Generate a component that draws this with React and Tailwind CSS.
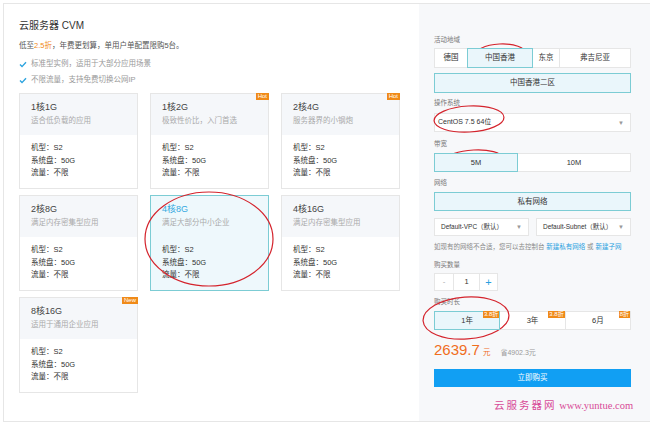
import React from "react"

const plans = [
  { name: "1核1G", desc: "适合低负载的应用" },
  { name: "1核2G", desc: "极致性价比，入门首选", tag: "Hot" },
  { name: "2核4G", desc: "服务器界的小钢炮", tag: "Hot" },
  { name: "2核8G", desc: "满足内存密集型应用" },
  { name: "4核8G", desc: "满足大部分中小企业", active: true },
  { name: "4核16G", desc: "满足内存密集型应用" },
  { name: "8核16G", desc: "适用于通用企业应用", tag: "New" },
]

function Check() {
  return (
    <svg width="8" height="7" viewBox="0 0 8 7" className="mr-[4px]">
      <polyline points="1,3.6 3,5.6 7,1.2" fill="none" stroke="#2ba3df" strokeWidth="1.4" />
    </svg>
  )
}

function Caret() {
  return <span className="text-[6px] text-[#999] leading-none">▼</span>
}

function PlanCard({ plan }) {
  const on = plan.active
  return (
    <div className={"relative h-[96px] border " + (on ? "border-[#7cccd4] bg-[#eef8fc]" : "border-[#e6e6e6] bg-white")}>
      {plan.tag && (
        <div className="absolute -top-px -right-px h-[7px] px-[2px] bg-[#f08a18] text-white text-[6px] leading-[7px]">{plan.tag}</div>
      )}
      <div className={"h-[41px] pt-[7px] px-[11px] " + (on ? "" : "bg-[#f5f7fa]")}>
        <div className={"text-[9px] leading-[12px] " + (on ? "text-[#35a9e0]" : "text-[#444]")}>{plan.name}</div>
        <div className="mt-[3px] text-[7.5px] leading-[10px] text-[#aaa]">{plan.desc}</div>
      </div>
      <div className="pt-[7px] px-[11px] text-[7.5px] leading-[12.5px] text-[#333]">
        <div>机型：S2</div>
        <div>系统盘：50G</div>
        <div>流量：不限</div>
      </div>
    </div>
  )
}

function Label({ children, className = "" }) {
  return <div className={"text-[6.5px] leading-[10px] text-[#777] " + className}>{children}</div>
}

function Opt({ children, on, w, className = "" }) {
  return (
    <div
      className={
        "flex items-center justify-center border text-[7.5px] " +
        (on ? "relative z-10 border-[#7cccd4] bg-[#eaf6fb] text-[#333] " : "border-[#e6e6e6] bg-white text-[#333] ") +
        className
      }
      style={w ? { width: w } : undefined}
    >
      {children}
    </div>
  )
}

export default function App() {
  return (
    <div className="relative w-[650px] h-[426px] bg-white overflow-hidden font-['Liberation_Sans','Noto_Sans_CJK_SC',sans-serif]">
      <div className="ml-[3px] mt-[3px] w-[647px] h-[419px] flex border-l border-t border-b border-[#e6e6e6]">
        {/* left: plans */}
        <div className="w-[415px] bg-white pl-[15px] pt-[15px]">
          <div className="text-[10px] leading-[14px] text-[#333]">云服务器 CVM</div>
          <div className="mt-[8px] text-[7.5px] leading-[10px] text-[#555]">
            低至<span className="text-[#f08a18]">2.5折</span>，年费更划算，单用户单配置限购5台。
          </div>
          <div className="mt-[8px] flex items-center text-[7.5px] leading-[10px] text-[#999]">
            <Check />标准型实例，适用于大部分应用场景
          </div>
          <div className="mt-[6px] flex items-center text-[7.5px] leading-[10px] text-[#999]">
            <Check />不限流量，支持免费切换公网IP
          </div>
          <div className="mt-[8px] grid grid-cols-[119px_119px_119px] gap-x-[12px] gap-y-[6px]">
            {plans.map((p) => (
              <PlanCard key={p.name} plan={p} />
            ))}
          </div>
        </div>

        {/* right: order form */}
        <div className="flex-1 bg-[#f7f8fa] pl-[15px] pt-[31px]">
          <div className="w-[197px]">
            <Label>活动地域</Label>
            <div className="mt-[3px] flex h-[20px]">
              <Opt w={34}>德国</Opt>
              <Opt w={66} on className="-ml-px">中国香港</Opt>
              <Opt w={28} className="-ml-px">东京</Opt>
              <Opt w={72} className="-ml-px">弗吉尼亚</Opt>
            </div>
            <Opt on className="mt-[5px] h-[20px]">中国香港二区</Opt>

            <Label className="mt-[5px]">操作系统</Label>
            <div className="mt-[5px] h-[19px] flex items-center justify-between bg-white border border-[#e6e6e6] pl-[3px] pr-[6px] text-[7px] text-[#333]">
              <span>CentOS 7.5 64位</span>
              <Caret />
            </div>

            <Label className="mt-[7px]">带宽</Label>
            <div className="mt-[4px] flex h-[19px]">
              <Opt w={84} on>5M</Opt>
              <Opt className="-ml-px flex-1">10M</Opt>
            </div>

            <Label className="mt-[6px]">网络</Label>
            <Opt on className="mt-[4px] h-[19px]">私有网络</Opt>

            <div className="mt-[7px] flex gap-[7px] h-[18px] text-[6.5px] text-[#333]">
              <div className="w-[95px] flex items-center justify-between bg-white border border-[#e6e6e6] pl-[6px] pr-[6px]">
                <span>Default-VPC（默认）</span>
                <Caret />
              </div>
              <div className="flex-1 flex items-center justify-between bg-white border border-[#e6e6e6] pl-[6px] pr-[6px]">
                <span>Default-Subnet（默认）</span>
                <Caret />
              </div>
            </div>

            <div className="mt-[6px] text-[6.5px] leading-[10px] text-[#888] whitespace-nowrap">
              如现有的网络不合适，您可以去控制台 <span className="text-[#2a9fe0]">新建私有网络</span> 或 <span className="text-[#2a9fe0]">新建子网</span>
            </div>

            <Label className="mt-[8px]">购买数量</Label>
            <div className="mt-[3px] flex h-[18px] text-[#333]">
              <div className="w-[20px] flex items-center justify-center bg-white border border-[#e6e6e6] text-[8px] text-[#aaa]">-</div>
              <div className="-ml-px w-[27px] flex items-center justify-center bg-white border border-[#e6e6e6] text-[7.5px]">1</div>
              <div className="-ml-px w-[19px] flex items-center justify-center bg-white border border-[#e6e6e6] text-[11px] text-[#2a9fe0]">+</div>
            </div>

            <Label className="mt-[6px]">购买时长</Label>
            <div className="mt-[4px] flex h-[19px]">
              {[
                { t: "1年", b: "3.8折", on: true },
                { t: "3年", b: "3.8折" },
                { t: "6月", b: "8折" },
              ].map((d, i) => (
                <Opt key={d.t} on={d.on} className={"relative flex-1 " + (i ? "-ml-px" : "")}>
                  {d.t}
                  <span className="absolute -top-[1px] right-0 h-[7px] px-[1px] bg-[#f08a18] text-white text-[6px] leading-[7px]">{d.b}</span>
                </Opt>
              ))}
            </div>

            <div className="mt-[10px] h-[20px] flex items-baseline">
              <span className="text-[15px] leading-[20px] text-[#f06e1e]">2639.7</span>
              <span className="ml-[3px] text-[7.5px] text-[#f06e1e]">元</span>
              <span className="ml-[10px] text-[7px] text-[#999]">省4902.3元</span>
            </div>

            <div className="mt-[9px] h-[18px] flex items-center justify-center bg-[#119ff3] text-white text-[7.5px]">立即购买</div>

            <div className="mt-[12px] pl-[60px] text-[10.5px] leading-[14px] text-[#d84a97] whitespace-nowrap font-['Liberation_Serif','Noto_Sans_CJK_SC',serif]">
              <span className="tracking-[2px]">云服务器网</span> www.yuntue.com
            </div>
          </div>
        </div>
      </div>

      {/* red hand-drawn annotations */}
      <svg className="absolute inset-0 pointer-events-none" width="650" height="426">
        <g fill="none" stroke="#d4232c" strokeWidth="1.2">
          <ellipse cx="500" cy="55" rx="26" ry="11" transform="rotate(-3 500 55)" />
          <ellipse cx="469" cy="119" rx="35" ry="13" transform="rotate(-3 469 119)" />
          <ellipse cx="474" cy="159" rx="28" ry="9" transform="rotate(-3 474 159)" />
          <ellipse cx="466" cy="318" rx="43" ry="21" transform="rotate(-4 466 318)" />
          <ellipse cx="209" cy="239" rx="64" ry="47" />
        </g>
      </svg>
    </div>
  )
}
